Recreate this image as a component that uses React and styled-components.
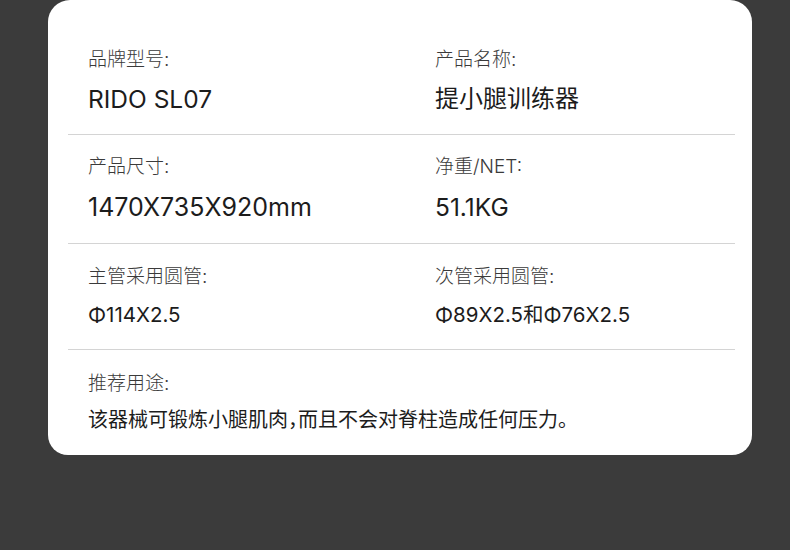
import React from "react";
import styled, { createGlobalStyle } from "styled-components";

const GlobalStyle = createGlobalStyle`
  html, body {
    margin: 0;
    padding: 0;
    background: #3b3b3b;
  }
  body {
    font-family: "Inter", "Noto Sans CJK SC", sans-serif;
  }
`;

const specs = [
  {
    cells: [
      { label: "品牌型号:", value: "RIDO SL07", size: 24.5 },
      { label: "产品名称:", value: "提小腿训练器", size: 24 },
    ],
    pad: "20px 0 19px",
    gap: 11,
  },
  {
    cells: [
      { label: "产品尺寸:", value: "1470X735X920mm", size: 25 },
      { label: "净重/NET:", value: "51.1KG", size: 24.5 },
    ],
    pad: "20px 0 20px",
    gap: 12,
  },
  {
    cells: [
      { label: "主管采用圆管:", value: "Φ114X2.5", size: 20.5 },
      { label: "次管采用圆管:", value: "Φ89X2.5和Φ76X2.5", size: 20.5 },
    ],
    pad: "21px 0 20px",
    gap: 12,
  },
];

function App() {
  return (
    <>
      <GlobalStyle />
      <Page>
        <Card>
          {specs.map((row, i) => (
            <Row key={i} $pad={row.pad}>
              {row.cells.map((cell) => (
                <Cell key={cell.label} $gap={row.gap}>
                  <Label>{cell.label}</Label>
                  <Value $size={cell.size}>{cell.value}</Value>
                </Cell>
              ))}
            </Row>
          ))}
          <Row $pad="22px 0 22px" $last>
            <Cell $gap={10} $wide>
              <Label>推荐用途:</Label>
              <Value $size={20}>该器械可锻炼小腿肌肉，而且不会对脊柱造成任何压力。</Value>
            </Cell>
          </Row>
        </Card>
      </Page>
    </>
  );
}

export default App;

const Page = styled.div`
  width: 790px;
  height: 550px;
  padding: 0 38px 0 48px;
  box-sizing: border-box;
  overflow: hidden;
`;

const Card = styled.div`
  background: #ffffff;
  border-radius: 22px 22px 20px 20px;
  padding: 28px 17px 0 20px;
  height: 455px;
  box-sizing: border-box;
`;

const Row = styled.div`
  display: grid;
  grid-template-columns: 347px 1fr;
  padding: ${(p) => p.$pad};
  padding-left: 20px;
  border-bottom: ${(p) => (p.$last ? "none" : "1px solid #d4d4d4")};
`;

const Cell = styled.div`
  display: flex;
  flex-direction: column;
  gap: ${(p) => p.$gap}px;
  grid-column: ${(p) => (p.$wide ? "1 / -1" : "auto")};
`;

const Label = styled.div`
  font-size: 19px;
  line-height: 24px;
  color: #3a3a3a;
  font-weight: 300;
`;

const Value = styled.div`
  font-size: ${(p) => p.$size}px;
  line-height: 32px;
  height: ${(p) => (p.$size > 22 ? 32 : 28)}px;
  display: flex;
  align-items: center;
  color: #1c1c1c;
  white-space: nowrap;
  font-feature-settings: "halt";
`;
